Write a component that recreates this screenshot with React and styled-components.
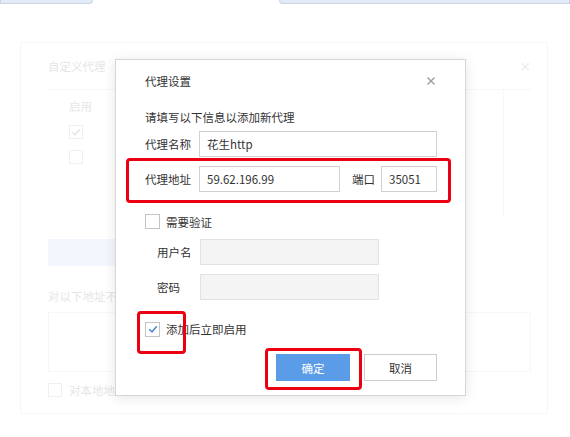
import styled, { createGlobalStyle } from "styled-components";

const GlobalStyle = createGlobalStyle`
  html, body {
    margin: 0;
    padding: 0;
    background: #ffffff;
  }
  body {
    font-family: "Noto Sans CJK SC", "Noto Sans", sans-serif;
    font-size: 11.5px;
    color: #333333;
  }
`;

const Root = styled.div`
  position: relative;
  width: 570px;
  height: 437px;
  overflow: hidden;
  background: #ffffff;
`;

/* faded page behind the dialog */
const TabStrip = styled.div`
  display: flex;
  justify-content: space-between;
  height: 4px;
`;

const Tab = styled.div`
  width: ${(p) => p.w}px;
  height: 4px;
  background: #e2eaf5;
  border: 1px solid #c9d6e8;
  border-top: none;
  box-sizing: border-box;
  border-radius: ${(p) => (p.side === "left" ? "0 0 4px 0" : "0 0 0 4px")};
`;

const BackPanel = styled.div`
  margin: 38px 22px 0 20px;
  height: 372px;
  border: 1px solid #f7f7f7;
  box-sizing: border-box;
  padding: 0 16px 0 27px;
  color: #e6e6e6;
  display: flex;
  flex-direction: column;
`;

const BackHeader = styled.div`
  height: 46px;
  display: flex;
  align-items: center;
  justify-content: space-between;
`;

const BackTable = styled.div`
  height: 128px;
  border-top: 1px solid #f7f7f7;
  display: grid;
  grid-template-columns: 1fr 54px 28px;
`;

const BackCol = styled.div`
  border-left: ${(p) => (p.line ? "1px solid #f8f8f8" : "none")};
  display: flex;
  flex-direction: column;
  gap: 11px;
  padding: 8px 0 0 ${(p) => p.pad || 0}px;
`;

const FaintBox = styled.div`
  width: 14px;
  height: 14px;
  border: 1px solid #f0f0f0;
  box-sizing: border-box;
  display: flex;
  align-items: center;
  justify-content: center;
`;

const FaintButton = styled.div`
  margin-top: 21px;
  width: 67px;
  height: 27px;
  background: #f3f6fc;
`;

const FaintText = styled.div`
  margin-top: ${(p) => p.mt || 0}px;
  display: flex;
  align-items: center;
  gap: 7px;
`;

const FaintArea = styled.div`
  margin-top: 8px;
  height: 58px;
  border: 1px solid #f7f7f7;
`;

/* dialog */
const Modal = styled.div`
  position: absolute;
  left: 115px;
  top: 59px;
  width: 351px;
  height: 337px;
  box-sizing: border-box;
  background: #ffffff;
  border: 1px solid #d6d6d6;
  box-shadow: 0 2px 12px rgba(0, 0, 0, 0.1);
  padding: 0 28px 14px 29px;
  display: flex;
  flex-direction: column;
`;

const Header = styled.div`
  height: 43px;
  display: flex;
  align-items: center;
  justify-content: space-between;
`;

const Close = styled.svg`
  width: 8px;
  height: 8px;
  margin-right: 2px;
`;

const Intro = styled.div`
  margin-top: 5px;
  line-height: 20px;
`;

const Row = styled.div`
  display: flex;
  align-items: center;
  height: 26px;
  margin-top: ${(p) => p.mt}px;
  padding-left: ${(p) => p.indent || 0}px;
`;

const Label = styled.div`
  width: ${(p) => p.w}px;
  flex-shrink: 0;
`;

const Input = styled.div`
  box-sizing: border-box;
  height: 26px;
  width: ${(p) => (p.w ? `${p.w}px` : "auto")};
  flex: ${(p) => (p.w ? "none" : 1)};
  border: 1px solid ${(p) => (p.disabled ? "#e2e2e2" : "#d0d0d0")};
  background: ${(p) => (p.disabled ? "#f4f4f4" : "#ffffff")};
  padding: 0 7px;
  display: flex;
  align-items: center;
  color: #333333;
`;

const PortLabel = styled.div`
  margin: 0 6px 0 12px;
`;

const CheckRow = styled.label`
  display: flex;
  align-items: center;
  height: 20px;
  margin-top: ${(p) => p.mt}px;
`;

const Box = styled.span`
  width: 15px;
  height: 15px;
  box-sizing: border-box;
  border: 1px solid #c4c4c4;
  background: #ffffff;
  margin-right: 6px;
  display: flex;
  align-items: center;
  justify-content: center;
`;

const Footer = styled.div`
  margin-top: 15px;
  display: flex;
  justify-content: flex-end;
  gap: 14px;
`;

const Button = styled.button`
  box-sizing: border-box;
  width: ${(p) => p.w}px;
  height: 27px;
  font-family: inherit;
  font-size: 11.5px;
  padding: 0;
  cursor: pointer;
  border: 1px solid ${(p) => (p.primary ? "#5b9ce8" : "#cccccc")};
  background: ${(p) => (p.primary ? "#5b9ce8" : "#ffffff")};
  color: ${(p) => (p.primary ? "#ffffff" : "#333333")};
`;

/* red annotation frames drawn over the screenshot */
const Mark = styled.div`
  position: absolute;
  left: ${(p) => p.x}px;
  top: ${(p) => p.y}px;
  width: ${(p) => p.w}px;
  height: ${(p) => p.h}px;
  box-sizing: border-box;
  border: 3px solid #ea0012;
  border-radius: 4px;
  pointer-events: none;
`;

const Check = ({ color = "#4a8bd6", size = 10 }) => (
  <svg width={size} height={size} viewBox="0 0 10 10">
    <path d="M1.2 5.2 L4 7.8 L8.8 2.2" fill="none" stroke={color} strokeWidth="1.5" />
  </svg>
);

export default function App() {
  return (
    <Root>
      <GlobalStyle />
      <TabStrip>
        <Tab side="left" w={93} />
        <Tab side="right" w={291} />
      </TabStrip>

      <BackPanel>
        <BackHeader>
          <span>自定义代理</span>
          <span>×</span>
        </BackHeader>
        <BackTable>
          <BackCol pad={21}>
            <span>启用</span>
            <FaintBox>
              <Check color="#e8e8e8" />
            </FaintBox>
            <FaintBox />
          </BackCol>
          <BackCol line />
          <BackCol line />
        </BackTable>
        <FaintButton />
        <FaintText mt={22}>对以下地址不</FaintText>
        <FaintArea />
        <FaintText mt={10}>
          <FaintBox /> 对本地地址
        </FaintText>
      </BackPanel>

      <Modal>
        <Header>
          <span>代理设置</span>
          <Close viewBox="0 0 8 8">
            <path d="M0.5 0.5 L7.5 7.5 M7.5 0.5 L0.5 7.5" stroke="#9a9a9a" strokeWidth="1.3" />
          </Close>
        </Header>
        <Intro>请填写以下信息以添加新代理</Intro>

        <Row mt={4}>
          <Label w={54}>代理名称</Label>
          <Input>花生http</Input>
        </Row>
        <Row mt={9}>
          <Label w={54}>代理地址</Label>
          <Input w={141}>59.62.196.99</Input>
          <PortLabel>端口</PortLabel>
          <Input>35051</Input>
        </Row>

        <CheckRow mt={20}>
          <Box />
          需要验证
        </CheckRow>
        <Row mt={8} indent={12}>
          <Label w={43}>用户名</Label>
          <Input w={179} disabled />
        </Row>
        <Row mt={9} indent={12}>
          <Label w={43}>密码</Label>
          <Input w={179} disabled />
        </Row>

        <CheckRow mt={19}>
          <Box>
            <Check />
          </Box>
          添加后立即启用
        </CheckRow>

        <Footer>
          <Button primary w={74}>确定</Button>
          <Button w={73}>取消</Button>
        </Footer>
      </Modal>

      <Mark x={126} y={158} w={325} h={45} />
      <Mark x={137} y={311} w={49} h={43} />
      <Mark x={265} y={348} w={97} h={42} />
    </Root>
  );
}
